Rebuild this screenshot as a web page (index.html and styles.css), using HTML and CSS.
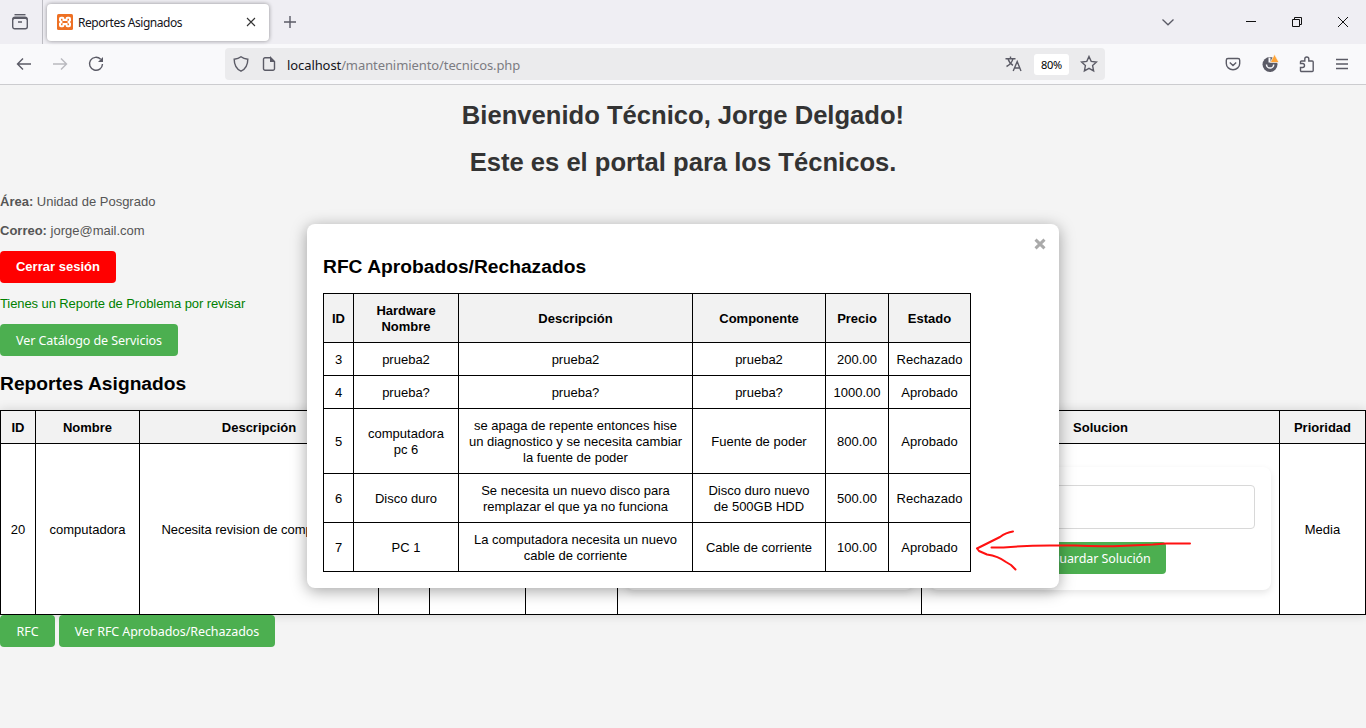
FILE: index.html
```html
<!DOCTYPE html>
<html lang="es">
<head>
<meta charset="utf-8">
<title>Reportes Asignados</title>
<link rel="stylesheet" href="styles.css">
</head>
<body>
<header class="browser">
  <div class="tabstrip">
    <div class="view"><svg width="18" height="18" viewBox="0 0 18 18"><path d="M3.5 1.7h11" /><rect x="1.7" y="5.2" width="14.6" height="10.6" rx="2"/><path d="M1.8 6.5c0-1.5.7-2.2 2.2-2.2h10c1.500 0 2.200.7 2.200 2.200M7 9h4"/></svg></div>
    <div class="tab">
      <svg width="16" height="16" viewBox="0 0 16 16"><rect width="16" height="16" rx="1.500" fill="#ee7023" stroke="none"/><path d="M3 6.300V4.800Q3 3.800 4 3.800h1.500Q6.500 3.800 6.500 5v1h3V5q0-1.200 1-1.200H12q1 0 1 1v1.500L11.500 8 13 9.700v1.500q0 1-1 1h-1.500q-1 0-1-1.200v-1h-3v1q0 1.200-1 1.200H4q-1 0-1-1V9.700L4.500 8z" stroke="#fff" stroke-width="2" fill="none"/></svg>
      <span class="tab-title">Reportes Asignados</span>
      <svg class="tab-close" width="10" height="10" viewBox="0 0 10 10"><path d="M1 1l8 8M9 1L1 9"/></svg>
    </div>
    <svg class="plus" width="14" height="14" viewBox="0 0 14 14"><path d="M7 1v12M1 7h12"/></svg>
    <div class="window-controls">
      <svg class="gray" width="14" height="14" viewBox="0 0 14 14"><path d="M1.500 4.500L7 9.800l5.500-5.300"/></svg>
      <svg class="min" width="12" height="12" viewBox="0 0 12 12"><path d="M1 5.500h10"/></svg>
      <svg width="12" height="12" viewBox="0 0 12 12"><path d="M1.500 3.500h7v7h-7zM3.500 3.500v-2h7v7h-2"/></svg>
      <svg width="12" height="12" viewBox="0 0 12 12"><path d="M1 1l10 10M11 1L1 11"/></svg>
    </div>
  </div>
  <div class="toolbar">
    <div class="nav">
      <svg width="16" height="16" viewBox="0 0 16 16"><path d="M15 8H1.500M7 2.500L1.500 8 7 13.500"/></svg>
      <svg class="off" width="16" height="16" viewBox="0 0 16 16"><path d="M1 8h13.500M9 2.500L14.500 8 9 13.500"/></svg>
      <svg width="16" height="16" viewBox="0 0 16 16"><path d="M12.700 3.300A6.500 6.500 0 1 0 14.500 8"/><path d="M15 1v5h-5z" fill="#5b5b66" stroke="none"/></svg>
    </div>
    <div class="urlbar">
      <svg width="16" height="16" viewBox="0 0 16 16"><path d="M8 .8C6.500 2 4 3 1.200 3.200c0 5.300 1.200 9.300 6.800 12 5.600-2.700 6.800-6.700 6.800-12C12 3 9.500 2 8 .8z"/></svg>
      <svg class="doc" width="14" height="16" viewBox="0 0 14 16"><path d="M8.500 1.700H3a1.500 1.500 0 0 0-1.500 1.500v9.600A1.500 1.500 0 0 0 3 14.300h8a1.500 1.500 0 0 0 1.500-1.500V5.500L8.700 1.700v3.600h3.600"/><path d="M8.500 1.500l4 4h-4z" fill="#5b5b66" stroke="none"/></svg>
      <span class="url">localhost<span>/mantenimiento/tecnicos.php</span></span>
      <svg width="17" height="16" viewBox="0 0 17 16"><path d="M.5 2.700h10M5.500.5v2.200M8 2.700C7.200 6 4.500 9 1.500 10.500M3 2.700C4 6 5.500 8 8 9.300M8.200 15l4-9.500L16 15M9.800 12h5"/></svg>
      <span class="zoom">80%</span>
      <svg width="18" height="18" viewBox="0 0 18 18"><path d="M9 1.500l2.200 4.900 5.300.6-3.900 3.600 1 5.300L9 13.300l-4.600 2.600 1-5.300L1.500 7l5.300-.6z"/></svg>
    </div>
    <div class="tools">
      <svg width="16" height="16" viewBox="0 0 16 16"><path d="M3 2.500h10a1.700 1.700 0 0 1 1.700 1.700V7.500a6.700 6.200 0 0 1-13.400 0V4.200A1.700 1.700 0 0 1 3 2.500zM4.800 6.500L8 9.500l3.200-3"/></svg>
      <svg class="account" width="18" height="18" viewBox="0 0 18 18"><circle cx="9" cy="9.500" r="7.500" fill="#5b5b66" stroke="none"/><path d="M8.500 2.500v5" stroke="#f9f9fb" stroke-width="2"/><path d="M5.500 9.500a3.600 3.600 0 0 0 7.200 0" stroke="#f9f9fb" stroke-width="1.500"/><path d="M13.500-.7l4.500 8.200H9.300z" fill="#ffa436" stroke="#f9f9fb" stroke-width=".7"/></svg>
      <svg width="16" height="18" viewBox="0 0 16 18"><path d="M2.500 6h3.300V4a2 2 0 0 1 4 0v2h3.400a1 1 0 0 1 1 1v8.500a1 1 0 0 1-1 1H2.500a1 1 0 0 1-1-1v-3h2a2 2 0 0 0 0-4h-2V7a1 1 0 0 1 1-1z"/></svg>
      <svg width="14" height="14" viewBox="0 0 14 14"><path d="M1 2.500h12M1 7h12M1 11.500h12"/></svg>
    </div>
  </div>
</header>
<main class="page">
  <h1>Bienvenido Técnico, Jorge Delgado!</h1>
  <h1>Este es el portal para los Técnicos.</h1>
  <p class="info"><strong>Área:</strong> Unidad de Posgrado</p>
  <p class="info"><strong>Correo:</strong> jorge@mail.com</p>
  <a class="logout"><span>Cerrar sesión</span></a>
  <p class="notice">Tienes un Reporte de Problema por revisar</p>
  <button class="btn catalog">Ver Catálogo de Servicios</button>
  <h2 class="reports-title">Reportes Asignados</h2>
  <table class="grid reports">
    <colgroup><col class="w35"><col class="w104"><col class="w239"><col class="w51"><col class="w96"><col class="w92"><col class="w304"><col class="w358"><col class="w86"></colgroup>
    <tr><th>ID</th><th>Nombre</th><th>Descripción</th><th></th><th></th><th></th><th></th><th>Solucion</th><th>Prioridad</th></tr>
    <tr class="report"><td>20</td><td>computadora</td><td class="summary">Necesita revision de componentes</td><td></td><td></td><td></td>
      <td class="form-cell"><div class="card"></div></td>
      <td class="form-cell"><div class="card"><div class="field"></div><button class="btn save">Guardar Solución</button></div></td>
      <td>Media</td></tr>
  </table>
  <div class="actions"><button class="btn rfc">RFC</button><button class="btn view-rfc">Ver RFC Aprobados/Rechazados</button></div>
</main>
<section class="modal">
  <div class="close"><svg width="12" height="12" viewBox="0 0 12 12"><path d="M1.500 1.700l9 8.600M10.500 1.700l-9 8.600"/></svg></div>
  <h2>RFC Aprobados/Rechazados</h2>
  <table class="grid rfcs">
    <colgroup><col class="w30"><col class="w105"><col class="w234"><col class="w133"><col class="w63"><col class="w82"></colgroup>
    <tr><th>ID</th><th>Hardware<br>Nombre</th><th>Descripción</th><th>Componente</th><th>Precio</th><th>Estado</th></tr>
    <tr><td>3</td><td>prueba2</td><td>prueba2</td><td>prueba2</td><td>200.00</td><td>Rechazado</td></tr>
    <tr><td>4</td><td>prueba?</td><td>prueba?</td><td>prueba?</td><td>1000.00</td><td>Aprobado</td></tr>
    <tr><td>5</td><td>computadora<br>pc 6</td><td>se apaga de repente entonces hise<br>un diagnostico y se necesita cambiar<br>la fuente de poder</td><td>Fuente de poder</td><td>800.00</td><td>Aprobado</td></tr>
    <tr><td>6</td><td>Disco duro</td><td>Se necesita un nuevo disco para<br>remplazar el que ya no funciona</td><td>Disco duro nuevo<br>de 500GB HDD</td><td>500.00</td><td>Rechazado</td></tr>
    <tr><td>7</td><td>PC 1</td><td>La computadora necesita un nuevo<br>cable de corriente</td><td>Cable de corriente</td><td>100.00</td><td>Aprobado</td></tr>
  </table>
</section>
<svg class="arrow" width="222" height="46" viewBox="0 0 222 46"><path d="M43 5.500Q36 6.500 30 11L20 16 7 22.500 9 25 17 28.500Q28 30 36 36L41 39 45.500 43.500M21.500 21.500l12 0Q55 19.500 80 19.500h25q25 1.500 50 .2L183 18.500l13-1H220"/></svg>
</body>
</html>
```
FILE: styles.css
```css
* { box-sizing: border-box; }
body { margin: 0; width: 1366px; height: 728px; overflow: hidden; position: relative; background: #f4f4f4; font: 13px/16px "Liberation Sans", Arial, sans-serif; color: #000; }
svg { display: block; flex: none; fill: none; stroke: #5b5b66; stroke-width: 1.4; }

/* Browser window */
.browser { height: 85px; border-bottom: 1px solid #cccccf; background: #f9f9fb; font-family: "Noto Sans", sans-serif; }
.tabstrip { height: 44px; background: #efeef3; display: flex; align-items: center; }
.view { width: 43px; height: 44px; border-right: 1px solid #bcbcc2; padding: 13px 0 0 11px; }
.tab { width: 222px; height: 37px; margin-left: 4px; background: #fff; border-radius: 4px; box-shadow: 0 0 4px rgba(0,0,0,.4); display: flex; align-items: center; padding: 0 13px 0 10px; }
.tab-title { margin-left: 5px; padding-top: 1px; flex: 1; font-size: 12px; letter-spacing: -.45px; color: #15141a; }
.tab-close { stroke: #333; stroke-width: 1.1; }
.plus { margin-left: 14px; }
.window-controls { margin-left: auto; display: flex; align-items: center; padding-right: 17px; }
.window-controls svg { margin-left: 34px; stroke: #111; stroke-width: 1; }
.window-controls .gray { margin-left: 0; stroke: #5b5b66; stroke-width: 1.3; }
.window-controls .min { margin-left: 70px; }
.toolbar { height: 40px; display: flex; align-items: center; }
.nav { width: 225px; display: flex; gap: 20px; padding-left: 16px; }
.off { opacity: .4; }
.urlbar { width: 880px; height: 32px; background: #ebebed; border-radius: 4px; display: flex; align-items: center; padding: 0 7px 0 8px; }
.doc { margin-left: 13px; }
.url { margin-left: 11px; padding-top: 2px; flex: 1; font-size: 13px; letter-spacing: -.09px; color: #15141a; }
.url span { color: #7c7c82; }
.zoom { width: 35px; height: 21px; margin: 0 11px 0 12px; background: #fff; border-radius: 3px; text-align: center; font-size: 11px; line-height: 22px; letter-spacing: -.2px; }
.tools { margin-left: auto; display: flex; align-items: center; gap: 20px; padding-right: 17px; }
.tools .account { overflow: visible; }

/* Technician page */
h1, h2, p { margin: 0; }
h1 { height: 47px; padding-top: 15px; font-size: 25.600px; line-height: 30px; color: #333; text-align: center; white-space: nowrap; }
h2 { font-size: 19.200px; line-height: 24px; height: 22px; letter-spacing: .02px; }
.info { margin-top: 13px; color: #555; }
h1 + .info { margin-top: 15px; }
.btn, .logout { display: block; height: 32px; border: 0; border-radius: 4px; padding: 0; background: #4caf50; color: #fff; text-align: center; white-space: nowrap; font: 12.500px/33px "Noto Sans", sans-serif; letter-spacing: -.08px; }
.logout { width: 116px; margin-top: 12px; background: #f00; font: bold 13px/32px "Liberation Sans", sans-serif; letter-spacing: .02px; }
.notice { margin: 12px 0; color: green; padding-top: 1px; letter-spacing: -.09px; }
.catalog { width: 178px; }
.reports-title { margin: 16px 0 16px; }
.grid { border-collapse: separate; border-spacing: 0; table-layout: fixed; border-top: 1px solid #000; border-left: 1px solid #000; background: #fff; }
.grid th, .grid td { padding: 9px 0 7px; border-right: 1px solid #000; border-bottom: 1px solid #000; text-align: center; vertical-align: middle; white-space: nowrap; }
.grid th { background: #f2f2f2; }
.grid .form-cell { padding: 7px 0 9px; }
.grid .summary { padding-left: 2px; letter-spacing: -.05px; }
.reports { width: 1366px; box-shadow: 0 0 10px rgba(0,0,0,.15); }
.report { height: 171px; }
.card { height: 123px; margin: 0 8px; padding: 18px 16px 0; border-radius: 8px; background: #fff; box-shadow: 0 3px 7px rgba(0,0,0,.1); }
.field { height: 44px; border: 1px solid #d8d8d8; border-radius: 4px; }
.save { width: 131px; margin: 13px auto 0; }
.actions { display: flex; gap: 4px; }
.rfc { width: 55px; }
.view-rfc { width: 216px; }
.w35 { width: 35px; } .w104 { width: 104px; } .w239 { width: 239px; } .w51 { width: 51px; } .w96 { width: 96px; } .w92 { width: 92px; } .w304 { width: 304px; } .w358 { width: 358px; } .w86 { width: 86px; }
.w30 { width: 30px; } .w105 { width: 105px; } .w234 { width: 234px; } .w133 { width: 133px; } .w63 { width: 63px; } .w82 { width: 82px; }

/* Dialog over the page */
.modal { position: absolute; left: 307px; top: 224px; width: 752px; height: 364px; border-radius: 8px; background: #fff; padding: 14px 13px 16px 16px; box-shadow: 0 3px 16px rgba(0,0,0,.36); }
.close { display: flex; justify-content: flex-end; height: 17px; }
.close svg { stroke: #aaa; stroke-width: 3; }
.rfcs { width: 648px; margin-top: 16px; }
.arrow { position: absolute; left: 970px; top: 526px; stroke: #f11; stroke-width: 2; stroke-linecap: round; stroke-linejoin: round; }
```
